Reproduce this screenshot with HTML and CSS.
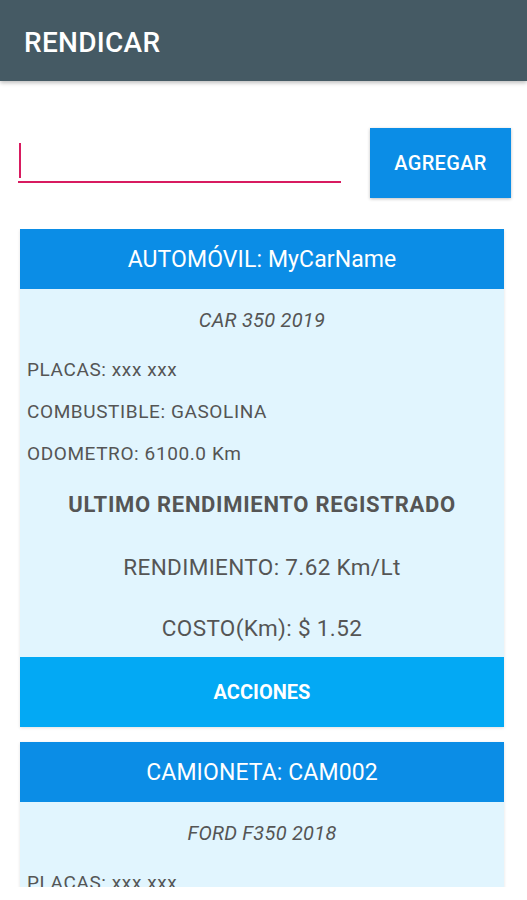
FILE: index.html
```html
<!DOCTYPE html>
<html lang="es">
<head>
<meta charset="utf-8">
<title>RENDICAR</title>
<link rel="stylesheet" href="styles.css">
</head>
<body>
<header class="toolbar"><h1 class="title">RENDICAR</h1></header>
<main class="content">
  <div class="form-row">
    <div class="field"><span class="cursor"></span></div>
    <button class="add-btn">AGREGAR</button>
  </div>
  <div class="list">
    <section class="card">
      <div class="card-head">AUTOMÓVIL: MyCarName</div>
      <div class="card-body">
        <p class="model">CAR 350 2019</p>
        <p class="info">PLACAS: xxx xxx</p>
        <p class="info">COMBUSTIBLE: GASOLINA</p>
        <p class="info">ODOMETRO: 6100.0 Km</p>
        <p class="subtitle">ULTIMO RENDIMIENTO REGISTRADO</p>
        <p class="stat">RENDIMIENTO: 7.62 Km/Lt</p>
        <p class="stat">COSTO(Km): $ 1.52</p>
      </div>
      <button class="actions">ACCIONES</button>
    </section>
    <section class="card">
      <div class="card-head">CAMIONETA: CAM002</div>
      <div class="card-body">
        <p class="model">FORD F350 2018</p>
        <p class="info">PLACAS: xxx xxx</p>
      </div>
    </section>
  </div>
</main>
</body>
</html>
```
FILE: styles.css
```css
* { box-sizing: border-box; }
html, body { margin: 0; padding: 0; background: #fff; }
body { font-family: Roboto, "Noto Sans", Arial, sans-serif; color: #555; }

.toolbar {
  height: 81px;
  background: #455a64;
  display: flex;
  align-items: center;
  padding: 3px 0 0 24px;
  box-shadow: 0 2px 4px rgba(0,0,0,0.25);
  position: relative;
}
.title {
  margin: 0;
  font-size: 28px;
  font-weight: 500;
  color: #fff;
  letter-spacing: 0.3px;
}

.content { padding: 47px 0 0 0; }

.form-row {
  display: flex;
  align-items: flex-start;
  padding-left: 18px;
}
.field {
  width: 323px;
  height: 40px;
  margin-top: 15px;
  border-bottom: 2px solid #d81b60;
  position: relative;
}
.cursor {
  position: absolute;
  left: 1px;
  top: 0;
  width: 2px;
  height: 35px;
  background: #d81b60;
}
.add-btn {
  margin-left: 29px;
  width: 141px;
  height: 70px;
  border: none;
  background: #0b8de6;
  color: #fff;
  font-family: Roboto, Arial, sans-serif;
  font-size: 20px;
  font-weight: 500;
  letter-spacing: 0.35px;
  box-shadow: 0 1px 3px rgba(0,0,0,0.25);
}

.list {
  margin-top: 31px;
  height: 658px;
  overflow: hidden;
  padding-left: 20px;
}
.card {
  width: 484px;
  margin-bottom: 15px;
  box-shadow: 0 1px 3px rgba(0,0,0,0.12);
}
.card-head {
  height: 60px;
  background: #0b8de6;
  color: #fff;
  font-size: 23px;
  letter-spacing: 0.1px;
  display: flex;
  align-items: center;
  justify-content: center;
}
.card-body {
  background: #e1f5fe;
  padding: 16px 0 9px;
}
.card-body p { margin: 0; }
.model {
  text-align: center;
  font-style: italic;
  font-size: 20px;
  letter-spacing: 0.25px;
  line-height: 30px;
  margin-bottom: 14px !important;
}
.info {
  font-size: 19px;
  letter-spacing: 0.6px;
  line-height: 42px;
  padding-left: 7px;
}
.subtitle {
  text-align: center;
  font-weight: 700;
  font-size: 22px;
  letter-spacing: 0.7px;
  line-height: 40px;
  margin-top: 10px !important;
  color: #555;
}
.stat {
  text-align: center;
  font-size: 22.5px;
  letter-spacing: 0.35px;
  line-height: 40px;
  margin-top: 22px !important;
}
.stat + .stat { margin-top: 21px !important; }
.actions {
  display: block;
  width: 100%;
  height: 70px;
  border: none;
  background: #03a9f4;
  color: #fff;
  font-family: Roboto, Arial, sans-serif;
  font-size: 20px;
  font-weight: 700;
}
```
